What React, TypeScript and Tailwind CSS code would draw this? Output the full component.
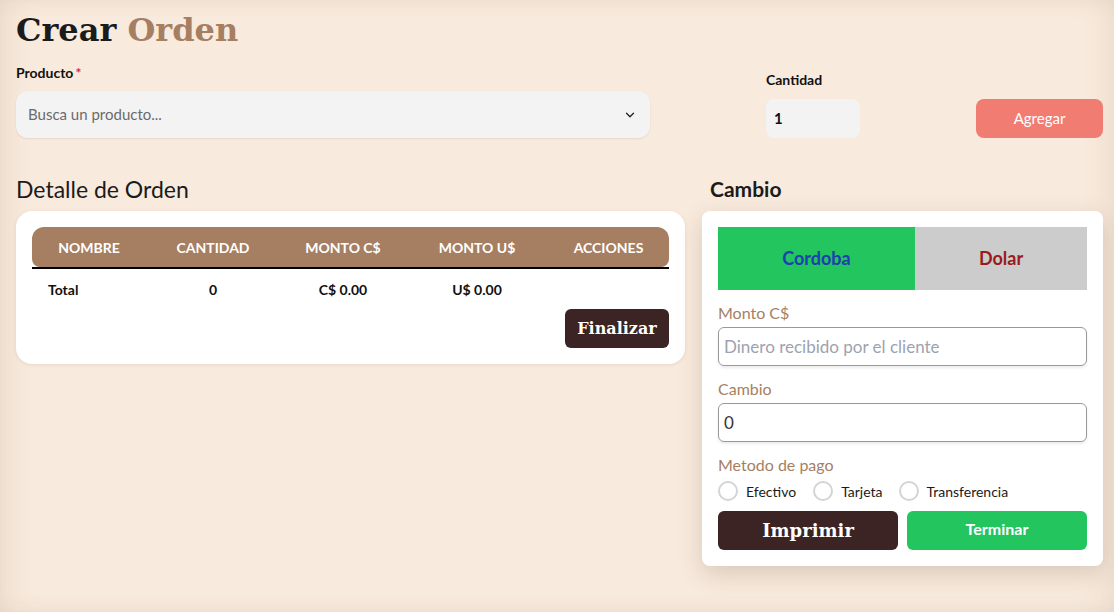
import { ChevronDown } from "lucide-react";

const sans = { fontFamily: "Lato, 'Liberation Sans', sans-serif" };
const serif = { fontFamily: "'DejaVu Serif', 'Liberation Serif', serif" };

const cols = "grid grid-cols-[114px_134px_126px_142px_121px]";

const App = () => {
  return (
    <div
      className="w-[1114px] h-[612px] bg-[#f8eadd] shadow-[inset_14px_0_30px_-10px_rgba(120,80,40,0.12),inset_-14px_0_30px_-10px_rgba(120,80,40,0.10)] overflow-hidden text-[#111]"
      style={sans}
    >
      <div className="pl-4 pr-[11px] pt-[8px]">
        <h1 className="text-[32px] font-bold leading-[44px]" style={serif}>
          <span className="text-[#1b1b1b]">Crear</span>{" "}
          <span className="text-[#a67e62]">Orden</span>
        </h1>

        <div className="flex items-end mt-[12px]">
          <div className="w-[634px]">
            <div className="text-[14px] font-bold h-[18px] leading-[18px]">
              Producto<span className="text-[#e11d48] ml-[2px]">*</span>
            </div>
            <div className="mt-[9px] h-[47px] bg-[#f3f3f3] rounded-xl shadow-[0_1px_2px_rgba(0,0,0,0.08)] flex items-center justify-between pl-3 pr-[13px]">
              <span className="text-[15px] text-[#6b6b6b]">Busca un producto...</span>
              <ChevronDown size={14} strokeWidth={2.2} className="text-[#222]" />
            </div>
          </div>

          <div className="ml-[116px] w-[94px]">
            <div className="text-[14px] font-bold leading-[18px]">Cantidad</div>
            <div className="mt-[10px] h-[39px] bg-[#f3f3f3] rounded-lg flex items-center px-2 text-[15px] font-bold">
              1
            </div>
          </div>

          <button className="ml-auto w-[127px] h-[39px] rounded-lg bg-[#f17c72] text-white text-[15px]">
            Agregar
          </button>
        </div>

        <div className="flex mt-[37px] gap-[17px] items-start">
          <div className="w-[669px] shrink-0">
            <h2 className="text-[23px] leading-[28px] text-[#1b1b1b]">Detalle de Orden</h2>
            <div className="mt-[8px] bg-white rounded-2xl shadow-[0_1px_4px_rgba(0,0,0,0.08)] p-4 pb-4">
              <div className={`${cols} h-[40px] items-center bg-[#a67f62] rounded-t-xl rounded-b-lg text-white text-[14px] font-bold text-center`}>
                <div>NOMBRE</div>
                <div>CANTIDAD</div>
                <div>MONTO C$</div>
                <div>MONTO U$</div>
                <div>ACCIONES</div>
              </div>
              <div className="h-[2px] bg-black" />
              <div className={`${cols} h-[40px] items-center text-[14px] font-bold text-center`}>
                <div className="text-left pl-4">Total</div>
                <div>0</div>
                <div>C$ 0.00</div>
                <div>U$ 0.00</div>
                <div></div>
              </div>
              <div className="flex justify-end">
                <button
                  className="w-[104px] h-[39px] rounded-md bg-[#3c2324] text-white text-[16px] font-bold"
                  style={serif}
                >
                  Finalizar
                </button>
              </div>
            </div>
          </div>

          <div className="w-[401px] shrink-0">
            <h2 className="text-[21px] leading-[28px] font-bold pl-2 text-[#1b1b1b]">Cambio</h2>
            <div className="mt-[8px] bg-white rounded-lg shadow-[0_8px_24px_rgba(80,50,20,0.18)] p-4">
              <div className="flex h-[63px] text-[18px] font-bold">
                <div className="w-[197px] bg-[#22c55e] text-[#1e40af] flex items-center justify-center">
                  Cordoba
                </div>
                <div className="flex-1 bg-[#cccccc] text-[#991b1b] flex items-center justify-center">
                  Dolar
                </div>
              </div>

              <div className="mt-[11px] text-[16px] leading-[24px] text-[#a67f62]">Monto C$</div>
              <div className="mt-[2px] h-[39px] border border-[#999] rounded-md flex items-center px-[5px] text-[17px] text-[#9ca3af] shadow-[0_2px_3px_rgba(0,0,0,0.08)]">
                Dinero recibido por el cliente
              </div>

              <div className="mt-[11px] text-[16px] leading-[24px] text-[#a67f62]">Cambio</div>
              <div className="mt-[2px] h-[39px] border border-[#999] rounded-md flex items-center px-[5px] text-[17px] text-[#333] shadow-[0_2px_3px_rgba(0,0,0,0.08)]">
                0
              </div>

              <div className="mt-[11px] text-[16px] leading-[24px] text-[#a67f62]">Metodo de pago</div>
              <div className="mt-[2px] flex items-center h-[24px] text-[14px] text-[#1b1b1b]">
                <span className="w-[20px] h-[20px] rounded-full border-2 border-[#d4d4d4]" />
                <span className="ml-2">Efectivo</span>
                <span className="ml-[17px] w-[20px] h-[20px] rounded-full border-2 border-[#d4d4d4]" />
                <span className="ml-2">Tarjeta</span>
                <span className="ml-[16px] w-[20px] h-[20px] rounded-full border-2 border-[#d4d4d4]" />
                <span className="ml-2">Transferencia</span>
              </div>

              <div className="flex gap-[9px] mt-[8px]">
                <button
                  className="w-[180px] h-[39px] rounded-md bg-[#3c2324] text-white text-[18px] font-bold"
                  style={serif}
                >
                  Imprimir
                </button>
                <button className="flex-1 h-[39px] rounded-md bg-[#22c55e] text-white text-[16px] font-bold pb-1">
                  Terminar
                </button>
              </div>
            </div>
          </div>
        </div>
      </div>
    </div>
  );
};

export default App;
